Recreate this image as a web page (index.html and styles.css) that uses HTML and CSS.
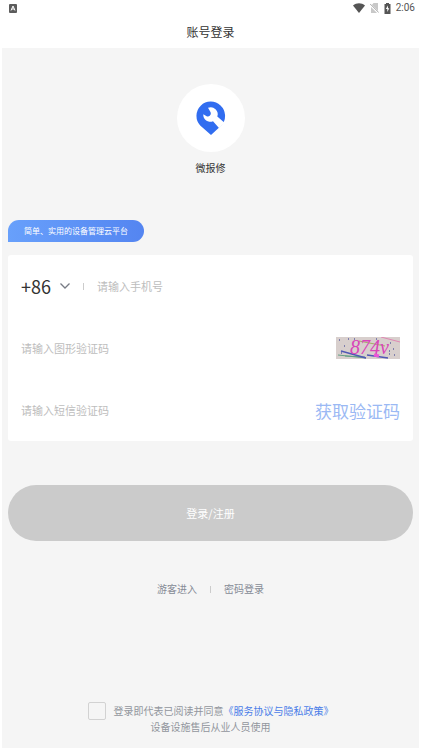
FILE: index.html
```html
<!DOCTYPE html>
<html lang="zh-CN">
<head>
<meta charset="utf-8">
<meta name="viewport" content="width=device-width, initial-scale=1">
<title>账号登录</title>
<link rel="stylesheet" href="styles.css">
</head>
<body>
<div class="statusbar">
  <svg class="app-badge" width="8" height="9" viewBox="0 0 8 9" aria-hidden="true"><rect width="8" height="9" rx="1" fill="#5c5c5c"/><path d="M2 6.5 4 2l2 4.5M2.8 5h2.4" fill="none" stroke="#fff"/></svg>
  <div class="status-icons">
    <svg width="12" height="10" viewBox="0 0 12 10" aria-hidden="true"><path d="M0 2.5C3.5-.6 8.500-.6 12 2.500L6 10Z" fill="#555"/></svg>
    <svg width="9" height="10" viewBox="0 0 9 10" aria-hidden="true"><path d="M3.500 0H8v10H1V3Z" fill="#c8c8c8"/><path d="M0 1.500 8.500 10" stroke="#fff" stroke-width="2"/><path d="M0 .8 8.800 9.600" stroke="#aaa"/></svg>
    <svg width="7" height="11" viewBox="0 0 7 11" aria-hidden="true"><path d="M2 0h3v1h1.500v10H.5V1H2Z" fill="#555"/><path d="M4 2.500 1.800 6h1.500v3L5.300 5.300H4Z" fill="#fff"/></svg>
    <span class="clock">2:06</span>
  </div>
</div>
<header class="titlebar"><h1>账号登录</h1></header>
<main class="page">
  <div class="brand">
    <div class="logo">
      <svg width="30" height="34" viewBox="0 0 30 34" aria-hidden="true">
        <path d="M15 34 4.200 24.500A14.300 14.300 0 1 1 25.600 24.200Z" fill="#316df0"/>
        <path d="M12 6.800A7 7 0 0 1 21.300 15.600L28.500 21.800 23.200 27.200 17 20.300A7 7 0 0 1 7.300 13.200L10.600 15.200Q12.500 16 14 14.600 15.400 13.200 14.600 11.200Z" fill="#fff"/>
      </svg>
    </div>
    <p class="brand-name">微报修</p>
  </div>
  <p class="slogan">简单、实用的设备管理云平台</p>
  <form id="login" class="card">
    <div class="row">
      <button class="area" type="button" aria-label="国家区号">+86
        <svg width="12" height="8" viewBox="0 0 12 8" aria-hidden="true"><path d="m1.500 1.500 4.500 4.500 4.500-4.500" fill="none" stroke="#777b84" stroke-width="1.300"/></svg>
      </button>
      <span class="divider"></span>
      <input type="tel" aria-label="手机号" placeholder="请输入手机号">
    </div>
    <div class="row">
      <input type="text" aria-label="图形验证码" placeholder="请输入图形验证码">
      <button class="captcha" type="button" aria-label="刷新图形验证码">
        <svg width="64" height="22" viewBox="0 0 64 22">
          <rect width="64" height="22" fill="#d8cfcd"/>
          <g fill="none">
            <path d="M2 18 30 21M9 19 29 20" stroke="#62a184"/>
            <path d="M5 14 30 21M31 18 52 21" stroke="#5058b5" stroke-width="1.300"/>
            <path d="M23 4 49 9" stroke="#a5ac68"/>
            <path d="M45 0 64 5" stroke="#df87b3"/>
          </g>
          <text class="captcha-text" x="14" y="17">874v</text>
          <path d="M3 3h1m4 6h1m3-7h1m5 0h1m35 4h1m-2 8h1m-1 3h1m3-5h1m0 6h1M5 16h1m34-14h1" stroke="#6265a2" stroke-width="1.300"/>
          <path d="m38 18 5 1" stroke="#ec54d8" stroke-width="3"/>
        </svg>
      </button>
    </div>
    <div class="row">
      <input type="text" aria-label="短信验证码" placeholder="请输入短信验证码">
      <button class="get-code" type="button">获取验证码</button>
    </div>
  </form>
  <button class="submit" type="submit" form="login">登录/注册</button>
  <nav class="links"><a href="#guest">游客进入</a><span class="divider"></span><a href="#password">密码登录</a></nav>
  <footer class="terms">
    <div class="agree">
      <input id="agree" type="checkbox">
      <span><label for="agree">登录即代表已阅读并同意</label><a href="#terms">《服务协议与隐私政策》</a></span>
    </div>
    <p>设备设施售后从业人员使用</p>
  </footer>
</main>
</body>
</html>
```
FILE: styles.css
```css
* { box-sizing: border-box; }
body {
  margin: 0;
  min-height: 100vh;
  display: flex;
  flex-direction: column;
  background: #fff;
  color: #333;
  font-family: "Noto Sans CJK SC", sans-serif;
  font-size: 10px;
}
h1, p { margin: 0; font-weight: 400; }
a { color: inherit; text-decoration: none; }
button, input { font: inherit; margin: 0; padding: 0; border: 0; background: none; }
button { cursor: pointer; }
svg { display: block; }

.statusbar {
  height: 16px;
  padding: 0 6px 0 9px;
  display: flex;
  align-items: center;
  justify-content: space-between;
}
.status-icons { display: flex; align-items: center; gap: 5px; }
.clock { font-family: Roboto, sans-serif; font-size: 10px; line-height: 16px; color: #555; }
.titlebar { height: 32px; display: flex; align-items: center; justify-content: center; }
.titlebar h1 { font-size: 12px; line-height: 18px; }

.page {
  flex: 1;
  display: flex;
  flex-direction: column;
  margin: 0 2px 2px;
  padding: 36px 6px 14px;
  background: #f5f5f5;
}
.brand { display: flex; flex-direction: column; align-items: center; gap: 8px; }
.logo {
  width: 68px;
  height: 68px;
  border-radius: 50%;
  background: #fff;
  display: flex;
  align-items: center;
  justify-content: center;
}
.brand-name { font-size: 10px; line-height: 16px; }
.slogan {
  align-self: flex-start;
  margin: 44px 0 13px;
  padding: 0 16px;
  border-radius: 11px 11px 11px 0;
  background: linear-gradient(90deg, #68a0fb, #5485f1);
  color: #fff;
  font-size: 8px;
  line-height: 22px;
}

.card { padding: 0 13px; border-radius: 3px; background: #fff; }
.row { height: 62px; display: flex; align-items: center; }
.row input { flex: 1; min-width: 0; font-size: 11px; line-height: 20px; outline: 0; }
.row input::placeholder { color: #bdbdbd; opacity: 1; }
.area { display: flex; align-items: center; gap: 8px; font-size: 18px; color: #333; }
.divider { width: 1px; height: 7px; background: #ccc; }
.row .divider { margin: 0 13px 0 12px; }
.captcha-text { font: italic 20px "Liberation Serif", serif; fill: #d945b9; }
.get-code { font-size: 17px; color: #9bb9f4; }

.submit {
  width: 100%;
  height: 56px;
  margin-top: 44px;
  border-radius: 28px;
  background: #cbcbcb;
  color: #fff;
  font-size: 11px;
}
.links {
  display: flex;
  align-items: center;
  justify-content: center;
  gap: 13px;
  margin-top: 40px;
  line-height: 16px;
  color: #858b95;
}

.terms { margin-top: auto; line-height: 14px; color: #92969d; text-align: center; }
.agree { display: flex; align-items: center; justify-content: center; gap: 8px; }
.agree input {
  appearance: none;
  width: 18px;
  height: 18px;
  border: 1px solid #d2d2d2;
  border-radius: 2px;
}
.agree a { color: #4a7de8; }
```
